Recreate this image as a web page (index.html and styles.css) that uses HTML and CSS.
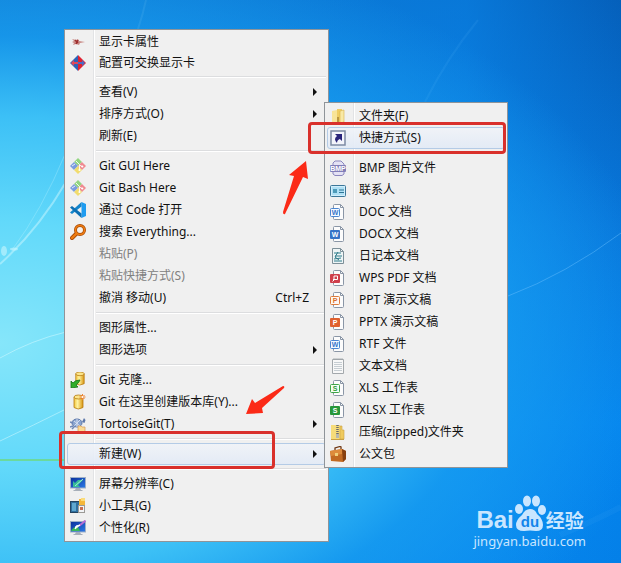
FILE: index.html
```html
<!DOCTYPE html>
<html lang="zh-CN">
<head>
<meta charset="utf-8">
<title>桌面</title>
<link rel="stylesheet" href="styles.css">
</head>
<body>
<svg class="defs" width="0" height="0" aria-hidden="true">
  <defs>
    <linearGradient id="gold" x1="0" x2="1"><stop offset="0" stop-color="#f3c63c"/><stop offset=".4" stop-color="#fff3a0"/><stop offset="1" stop-color="#d9950f"/></linearGradient>
    <linearGradient id="screen" x1="0" x2="1" y2="1"><stop offset="0" stop-color="#0b2f9a"/><stop offset="1" stop-color="#2c7be8"/></linearGradient>
    <symbol id="git" viewBox="0 0 16 16">
      <path d="M8 0l4 4-4 4-4-4z" fill="#93d682"/>
      <path d="M12 4l4 4-4 4-4-4z" fill="#f08a90"/>
      <path d="M4 4l4 4-4 4-4-4z" fill="#7b9ce0"/>
      <path d="M8 8l4 4-4 4-4-4z" fill="#f1dc6e"/>
      <path d="M6 3l3.500 3.500v5M9.500 7L12 8.500" fill="none" stroke="#fff" stroke-width=".9"/>
      <circle cx="9.500" cy="12" r="1.100" fill="#fff"/><circle cx="12.300" cy="8.500" r="1.100" fill="#fff"/>
      <path d="M2 8l3-2" stroke="#e9effc"/>
    </symbol>
    <symbol id="page" viewBox="0 0 16 16">
      <path d="M3.500 4V1.500q0-1 1-1h6l3 3v11q0 1-1 1h-8q-1 0-1-1V12" fill="#fcfcfc" stroke="#8a96a6"/>
      <path d="M10.500.5v3h3" fill="none" stroke="#8a96a6"/>
    </symbol>
    <symbol id="drum" viewBox="0 0 16 16">
      <path d="M4 3v10.500q4 3 9 0V3z" fill="url(#gold)" stroke="#b57a12" stroke-width=".8"/>
      <ellipse cx="8.500" cy="3" rx="4.500" ry="2" fill="#fbe58a" stroke="#b57a12" stroke-width=".8"/>
    </symbol>
    <symbol id="monitor" viewBox="0 0 16 16">
      <path d="M6 12h4l1 2H5z" fill="#a7afb9"/><path d="M3.500 14.500h9" stroke="#a7afb9"/>
      <rect x=".5" y="1.500" width="15" height="10.500" fill="url(#screen)" stroke="#9fb0c6"/>
    </symbol>
    <symbol id="arrow" viewBox="0 0 4 8"><path d="M0 0l4 4-4 4z" fill="#111"/></symbol>
  </defs>
</svg>

<main class="desktop">
  <svg class="wallpaper" viewBox="0 0 621 563" preserveAspectRatio="none" aria-hidden="true">
    <g fill="none" stroke="#d9fbff">
      <path d="M0 264Q38 230 66 182" stroke-width="2" opacity=".45"/>
      <path d="M12 250Q42 210 66 152" opacity=".25"/>
      <path d="M0 358Q32 340 66 332" opacity=".5"/>
      <path d="M0 441Q34 425 66 409" opacity=".5"/>
      <path d="M0 460H64" stroke="#6cd892" stroke-width="2" opacity=".9"/>
      <path d="M508 296Q566 274 621 233" stroke="#6cc2ff" opacity=".45"/>
      <path d="M425 102Q447 58 478 20" stroke="#6cc2ff" stroke-width="2" opacity=".1"/>
      <path d="M138 29Q143 14 146 0" stroke-width="2" opacity=".08"/>
      <path d="M560 535Q590 523 621 507" stroke="#6cc2ff" stroke-width="6" opacity=".08"/>
    </g>
    <g fill="#d9fbff" opacity=".5"><ellipse cx="4" cy="251" rx="3" ry="5"/><ellipse cx="14" cy="249" rx="4" ry="1.500"/></g>
  </svg>

  <nav class="menu menu--context" aria-label="桌面菜单">
    <div class="group group--driver">
      <button class="item"><svg class="icon" viewBox="0 0 16 16"><path d="M2 5l4 1 2-1 1 2 6 1-5 1-1 2-3-1-3 1 1-2-2-1 2-1z" fill="#c98b87"/><path d="M5 6l3 3M8 6L6 10" stroke="#9d2c2c" stroke-width="1.500"/></svg><span class="label">显示卡属性</span></button>
      <button class="item"><svg class="icon" viewBox="0 0 16 16"><path d="M8 0L0 8l8 8z" fill="#2d63b8"/><path d="M8 0l8 8-8 8z" fill="#df2233"/><path d="M1 8l3-3v2h4v2H4v2z" fill="#e0485c"/><path d="M15 8l-3-3v2H8v2h4v2z" fill="#4c6cc4"/></svg><span class="label">配置可交换显示卡</span></button>
    </div>
    <div class="group">
      <button class="item"><span class="icon"></span><span class="label">查看(V)</span><svg class="more"><use href="#arrow"/></svg></button>
      <button class="item"><span class="icon"></span><span class="label">排序方式(O)</span><svg class="more"><use href="#arrow"/></svg></button>
      <button class="item"><span class="icon"></span><span class="label">刷新(E)</span></button>
    </div>
    <div class="group">
      <button class="item"><svg class="icon"><use href="#git"/></svg><span class="label">Git GUI Here</span></button>
      <button class="item"><svg class="icon"><use href="#git"/></svg><span class="label">Git Bash Here</span></button>
      <button class="item"><svg class="icon" viewBox="0 0 16 16"><path d="M11.500 0L16 2v12l-4.500 2z" fill="#1f9cf0"/><path d="M11.500 0v4.500L2 12 0 10.500z" fill="#1384cb"/><path d="M11.500 16v-4.500L2 4 0 5.500z" fill="#0c6fb4"/></svg><span class="label">通过 Code 打开</span></button>
      <button class="item"><svg class="icon" viewBox="0 0 16 16"><path d="M6.500 9.500L2 14" stroke="#a84a05" stroke-width="4" stroke-linecap="round"/><circle cx="10" cy="6" r="4.500" fill="#f5f1ec" stroke="#a84a05" stroke-width="3"/><circle cx="10" cy="6" r="4.500" fill="none" stroke="#ef7d12" stroke-width="1.600"/><path d="M6.500 9.500L2 14" stroke="#ef7d12" stroke-width="2.400" stroke-linecap="round"/></svg><span class="label">搜索 Everything...</span></button>
      <button class="item" disabled><span class="icon"></span><span class="label">粘贴(P)</span></button>
      <button class="item" disabled><span class="icon"></span><span class="label">粘贴快捷方式(S)</span></button>
      <button class="item"><span class="icon"></span><span class="label">撤消 移动(U)</span><span class="shortcut">Ctrl+Z</span></button>
    </div>
    <div class="group">
      <button class="item"><span class="icon"></span><span class="label">图形属性...</span></button>
      <button class="item"><span class="icon"></span><span class="label">图形选项</span><svg class="more"><use href="#arrow"/></svg></button>
    </div>
    <div class="group">
      <button class="item"><svg class="icon" viewBox="0 0 16 16"><use href="#drum" x="2" y="-1" width="15" height="15"/><path d="M1 16V9l2 2q2-3 7-3-1 3-4 5l2 2z" fill="#2fae2a" stroke="#157516" stroke-width=".8"/></svg><span class="label">Git 克隆...</span></button>
      <button class="item"><svg class="icon" viewBox="0 0 16 16"><use href="#drum" width="16" height="16"/><path d="M12.500 0v6M9.500 3h6M10.500 1l4 4M14.500 1l-4 4" stroke="#ee8434"/><circle cx="12.500" cy="3" r="1" fill="#fff"/></svg><span class="label">Git 在这里创建版本库(Y)...</span></button>
      <button class="item"><svg class="icon" viewBox="0 0 16 16"><ellipse cx="7" cy="7" rx="5" ry="4" fill="#8aa5d0" stroke="#5d78aa"/><path d="M4 5l6 5M10 4l-6 6M7 3v8" stroke="#d4def0"/><path d="M12 6l2-4 1.500 2-1 3z" fill="#5d78aa"/><path d="M0 6l3 1M2 13l3-3M0 11l3-1" stroke="#6f89b8" stroke-width="1.500"/><path d="M8 10h3l1 1h3v4.500H8z" fill="#fadb94" stroke="#d59a50" stroke-width=".7"/></svg><span class="label">TortoiseGit(T)</span><svg class="more"><use href="#arrow"/></svg></button>
    </div>
    <div class="group">
      <button class="item item--active" aria-expanded="true"><span class="icon"></span><span class="label">新建(W)</span><svg class="more"><use href="#arrow"/></svg></button>
    </div>
    <div class="group">
      <button class="item"><svg class="icon" viewBox="0 0 16 16"><use href="#monitor" width="16" height="16"/><path d="M3 11V5l2 2 3-3h5L8 9l2 2z" fill="#38bd96"/><path d="M13 3L5 10" stroke="#a5f0d8"/></svg><span class="label">屏幕分辨率(C)</span></button>
      <button class="item"><svg class="icon" viewBox="0 0 16 16"><rect x=".5" y="3.500" width="9" height="11" fill="#2f6f9f" stroke="#24445f"/><path d="M2 5h4v8H2z" fill="#5ea7cf"/><rect x="9" y="1" width="6" height="6" fill="#f5b73a"/><path d="M11 0h4v3h-4z" fill="#fbdc7a"/><rect x="8.500" y="7.500" width="6" height="7" fill="#f2f4f6" stroke="#9c9a96"/><path d="M10 9h3v3h-3z" fill="#c96e50"/></svg><span class="label">小工具(G)</span></button>
      <button class="item"><svg class="icon" viewBox="0 0 16 16"><use href="#monitor" width="16" height="16"/><path d="M1 11q3-5 7-4l2 4z" fill="#37b75a"/><path d="M15.500.5L9 6" stroke="#b26bd3" stroke-width="2"/><path d="M10 5L5 9l1-3z" fill="#fff" stroke="#fff"/></svg><span class="label">个性化(R)</span></button>
    </div>
  </nav>

  <nav class="menu menu--new" aria-label="新建">
    <div class="group">
      <button class="item"><svg class="icon" viewBox="0 0 16 16"><path d="M2 3l5-1v13l-5-1z" fill="#f8e498"/><path d="M7 1h5v14H7z" fill="#efcd62"/><path d="M10 3l4-1v12l-4 1z" fill="#f9e9a5" stroke="#d8b34b" stroke-width=".6"/><path d="M7 9h2v5H7z" fill="#ba9740"/></svg><span class="label">文件夹(F)</span></button>
      <button class="item item--active"><svg class="icon" viewBox="0 0 16 16"><rect x="1" y="1" width="14" height="14" fill="#f3f4fb" stroke="#7e8ba4" stroke-width="1.500"/><path d="M5 4h7v7L9.800 9Q7 10 7 13 3 9 7 6z" fill="#29247a"/></svg><span class="label">快捷方式(S)</span></button>
    </div>
    <div class="group">
      <button class="item"><svg class="icon" viewBox="0 0 16 16"><path d="M3 5V3l2-2h6l3 3v1M3 12v2l2 1.500h7L14 14v-2" fill="#e4e2f4" stroke="#8a86bd"/><rect y="5" width="16" height="7" rx="1" fill="#827eb8"/><text class="tag" x="8" y="11">BMP</text></svg><span class="label">BMP 图片文件</span></button>
      <button class="item"><svg class="icon" viewBox="0 0 16 16"><rect x=".5" y="3.500" width="15" height="11" rx="1" fill="#d1eefb" stroke="#3c7799"/><rect x="2" y="5" width="12" height="8" fill="#aee0f5"/><rect x="3" y="7" width="4" height="4" fill="#4e9bb9"/><path d="M9 8h5M9 10.500h5" stroke="#2f7595"/></svg><span class="label">联系人</span></button>
      <button class="item"><svg class="icon" viewBox="0 0 16 16"><use href="#page" width="16" height="16"/><rect x=".5" y="4.500" width="9" height="8" rx="1" fill="#f4f9ff" stroke="#4b86d2"/><text class="tag" x="5" y="11" fill="#3977ca">W</text></svg><span class="label">DOC 文档</span></button>
      <button class="item"><svg class="icon" viewBox="0 0 16 16"><use href="#page" width="16" height="16"/><rect x="0" y="4" width="10" height="9" rx="1" fill="#3674c8"/><text class="tag" x="5" y="11">W</text></svg><span class="label">DOCX 文档</span></button>
      <button class="item"><svg class="icon" viewBox="0 0 16 16"><path d="M2.500.5h8l3 3v12h-11z" fill="#eef5f6" stroke="#7d8f98"/><path d="M10.500.5v3h3" fill="none" stroke="#7d8f98"/><path d="M4 5h7M4 13h8M4 11l7-1M5 8h7M8 4L5 9l4 3" fill="none" stroke="#2f7c8b"/></svg><span class="label">日记本文档</span></button>
      <button class="item"><svg class="icon" viewBox="0 0 16 16"><use href="#page" width="16" height="16"/><rect x="0" y="4" width="10" height="9" rx="1" fill="#cf3f4b"/><path d="M2.500 11.500L4 10V6h3.500v3.500H3" fill="none" stroke="#fff"/></svg><span class="label">WPS PDF 文档</span></button>
      <button class="item"><svg class="icon" viewBox="0 0 16 16"><use href="#page" width="16" height="16"/><rect x=".5" y="4.500" width="9" height="8" rx="1" fill="#fff8f2" stroke="#dd7c3c"/><text class="tag" x="5" y="11" fill="#d86f2c">P</text></svg><span class="label">PPT 演示文稿</span></button>
      <button class="item"><svg class="icon" viewBox="0 0 16 16"><use href="#page" width="16" height="16"/><rect x="0" y="4" width="10" height="9" rx="1" fill="#df602f"/><text class="tag" x="5" y="11">P</text></svg><span class="label">PPTX 演示文稿</span></button>
      <button class="item"><svg class="icon" viewBox="0 0 16 16"><use href="#page" width="16" height="16"/><rect x=".5" y="4.500" width="9" height="8" rx="1" fill="#f4f9ff" stroke="#4b86d2"/><text class="tag" x="5" y="11" fill="#3977ca">W</text></svg><span class="label">RTF 文件</span></button>
      <button class="item"><svg class="icon" viewBox="0 0 16 16"><path d="M2.500 1.500h11v14h-11z" fill="#f8f8f8" stroke="#a3a8ac"/><path d="M4 0v2M6 0v2M8 0v2M10 0v2M12 0v2" stroke="#9ba1a5" stroke-width=".8"/><path d="M4 4.500h8M4 6.500h8M4 8.500h8M4 10.500h8M4 12.500h8" stroke="#b9c2c8" stroke-width=".8"/></svg><span class="label">文本文档</span></button>
      <button class="item"><svg class="icon" viewBox="0 0 16 16"><use href="#page" width="16" height="16"/><rect x=".5" y="4.500" width="9" height="8" rx="1" fill="#f4fff4" stroke="#3da547"/><text class="tag" x="5" y="11" fill="#2f9a3a">S</text></svg><span class="label">XLS 工作表</span></button>
      <button class="item"><svg class="icon" viewBox="0 0 16 16"><use href="#page" width="16" height="16"/><rect x="0" y="4" width="10" height="9" rx="1" fill="#27973a"/><text class="tag" x="5" y="11">S</text></svg><span class="label">XLSX 工作表</span></button>
      <button class="item"><svg class="icon" viewBox="0 0 16 16"><path d="M1 1h9v14H1z" fill="#f6dc7a"/><path d="M10 2h2v4h2v9h-4z" fill="#efca5d" stroke="#c9a143" stroke-width=".6"/><path d="M1 15.500h13" stroke="#c9a143"/><path d="M7.500 1v14" stroke="#6a6a6a" stroke-width="2.500" stroke-dasharray="1 1"/><path d="M6 10h3v4H6z" fill="#b9b9ae"/></svg><span class="label">压缩(zipped)文件夹</span></button>
      <button class="item"><svg class="icon" viewBox="0 0 16 16"><path d="M5 4V2l5-1.500 1 .5v2" fill="none" stroke="#6d3511" stroke-width="1.300"/><path d="M0 5l12-2 4 2v8l-3 3-12-1z" fill="#c26a22"/><path d="M0 5l12-2v5L1 10z" fill="#dd8b3b"/><path d="M12 3l4 2v8l-3 3z" fill="#87400f"/><path d="M5 7h3v3H5z" fill="#f1cf7a"/></svg><span class="label">公文包</span></button>
    </div>
  </nav>

  <div class="mark mark--new"></div>
  <div class="mark mark--shortcut"></div>
  <svg class="pointer pointer--up" viewBox="0 0 25 54" aria-hidden="true"><path d="M23 0l2 18-5-2L2 53Q0 54 0 51l11-36-5-1z" fill="#fb2a17"/></svg>
  <svg class="pointer pointer--down" viewBox="0 0 39 28" aria-hidden="true"><path d="M0 28L6 13l3 4L37 0q2 0 1 2L16 22l1 5z" fill="#fb2a17"/></svg>

  <div class="watermark">
    <div class="brand">
      <span class="brand-name">Bai</span>
      <svg class="paw" viewBox="0 0 32 37"><ellipse cx="5" cy="14" rx="4" ry="5"/><ellipse cx="13" cy="6" rx="4" ry="5.500"/><ellipse cx="22" cy="6" rx="4" ry="5.500"/><ellipse cx="28" cy="15" rx="4" ry="5"/><path d="M16 14q5 0 7 5 6 5 6 11 0 6-7 6-6-1-12 0-8 0-8-6 0-5 6-10 3-6 8-6z"/><text x="16" y="32">du</text></svg>
      <span class="brand-topic">经验</span>
    </div>
    <a class="site" href="#">jingyan.baidu.com</a>
  </div>
</main>
</body>
</html>
```

FILE: styles.css
```css
*, *::before { box-sizing: border-box; }

body {
  margin: 0;
  font-family: "Noto Sans", "Noto Sans CJK SC", sans-serif;
  font-size: 12px;
  color: #111;
}

.defs { position: absolute; }

.desktop {
  position: relative;
  min-height: 100vh;
  overflow: hidden;
  background:
    radial-gradient(90% 62% at 0 61%, #86e6fa 0, #62d9fa 35%, #3cc0f6 65%, rgba(24, 158, 240, .75) 88%, rgba(16, 144, 240, 0) 120%),
    linear-gradient(to right, rgba(24, 140, 225, .6), rgba(12, 144, 246, .5) 75%, rgba(0, 90, 200, 0)),
    linear-gradient(#0560bb, #0876da 40%, #0484ee 75%, #0480e8);
}

.wallpaper {
  position: absolute;
  inset: 0;
  width: 100%;
  height: 100%;
}

.menu {
  position: absolute;
  border: 1px solid #8f9499;
  background: linear-gradient(to right, transparent 28px, #e2e3e5 28px, #e2e3e5 29px, #fff 29px, #fff 30px, transparent 30px) #f0f0f0;
}

.menu--context {
  left: 64px;
  top: 29px;
  min-width: 265px;
  padding: 1px 2px 2px;
}

.menu--new {
  left: 324px;
  top: 102px;
  min-width: 184px;
  padding: 2px;
}

.group + .group::before {
  content: "";
  display: block;
  height: 2px;
  margin: 3px 0 3px 29px;
  border-top: 1px solid #dcdddf;
  background: #fff;
}

.item {
  display: flex;
  align-items: center;
  width: 100%;
  height: 22px;
  padding: 0 8px 0 2px;
  border: 1px solid transparent;
  border-radius: 3px;
  background: none;
  font: inherit;
  line-height: 20px;
  color: inherit;
  text-align: left;
  white-space: nowrap;
}

.group--driver .item { height: 21px; }

.item:disabled { color: #808080; }

.item--active {
  border-color: #b4cbe6;
  background: linear-gradient(rgba(240, 243, 248, .9), rgba(226, 234, 246, .9));
}

.icon {
  flex: none;
  width: 16px;
  height: 16px;
  margin-right: 13px;
}

.label { flex: 1; }

.shortcut { padding-right: 8px; }

.more {
  width: 4px;
  height: 8px;
}

.tag {
  font: bold 7px "Liberation Sans", sans-serif;
  text-anchor: middle;
}

.tag:not([fill]) { fill: #fff; }

.mark {
  position: absolute;
  border: 3px solid #d9302b;
  border-radius: 4px;
}

.mark--new { left: 59px; top: 431px; width: 216px; height: 38px; }
.mark--shortcut { left: 308px; top: 122px; width: 198px; height: 32px; }

.pointer { position: absolute; }
.pointer--up { left: 283px; top: 161px; width: 25px; height: 54px; }
.pointer--down { left: 246px; top: 386px; width: 39px; height: 28px; }

.watermark {
  position: absolute;
  right: 35px;
  bottom: 13px;
  color: #c9e6ff;
}

.brand {
  display: flex;
  align-items: flex-end;
  height: 37px;
  padding-left: 3px;
}

.brand-name {
  font: bold 24px/24px "Liberation Sans", sans-serif;
}

.paw {
  width: 32px;
  height: 37px;
  fill: #c9e6ff;
}

.paw text {
  font: bold 15px "Liberation Sans", sans-serif;
  fill: #1284ea;
  text-anchor: middle;
}

.brand-topic {
  font: bold 19px/24px "Noto Sans CJK SC", sans-serif;
}

.site {
  display: block;
  font-size: 13px;
  line-height: 18px;
  color: inherit;
  text-decoration: none;
}
```
